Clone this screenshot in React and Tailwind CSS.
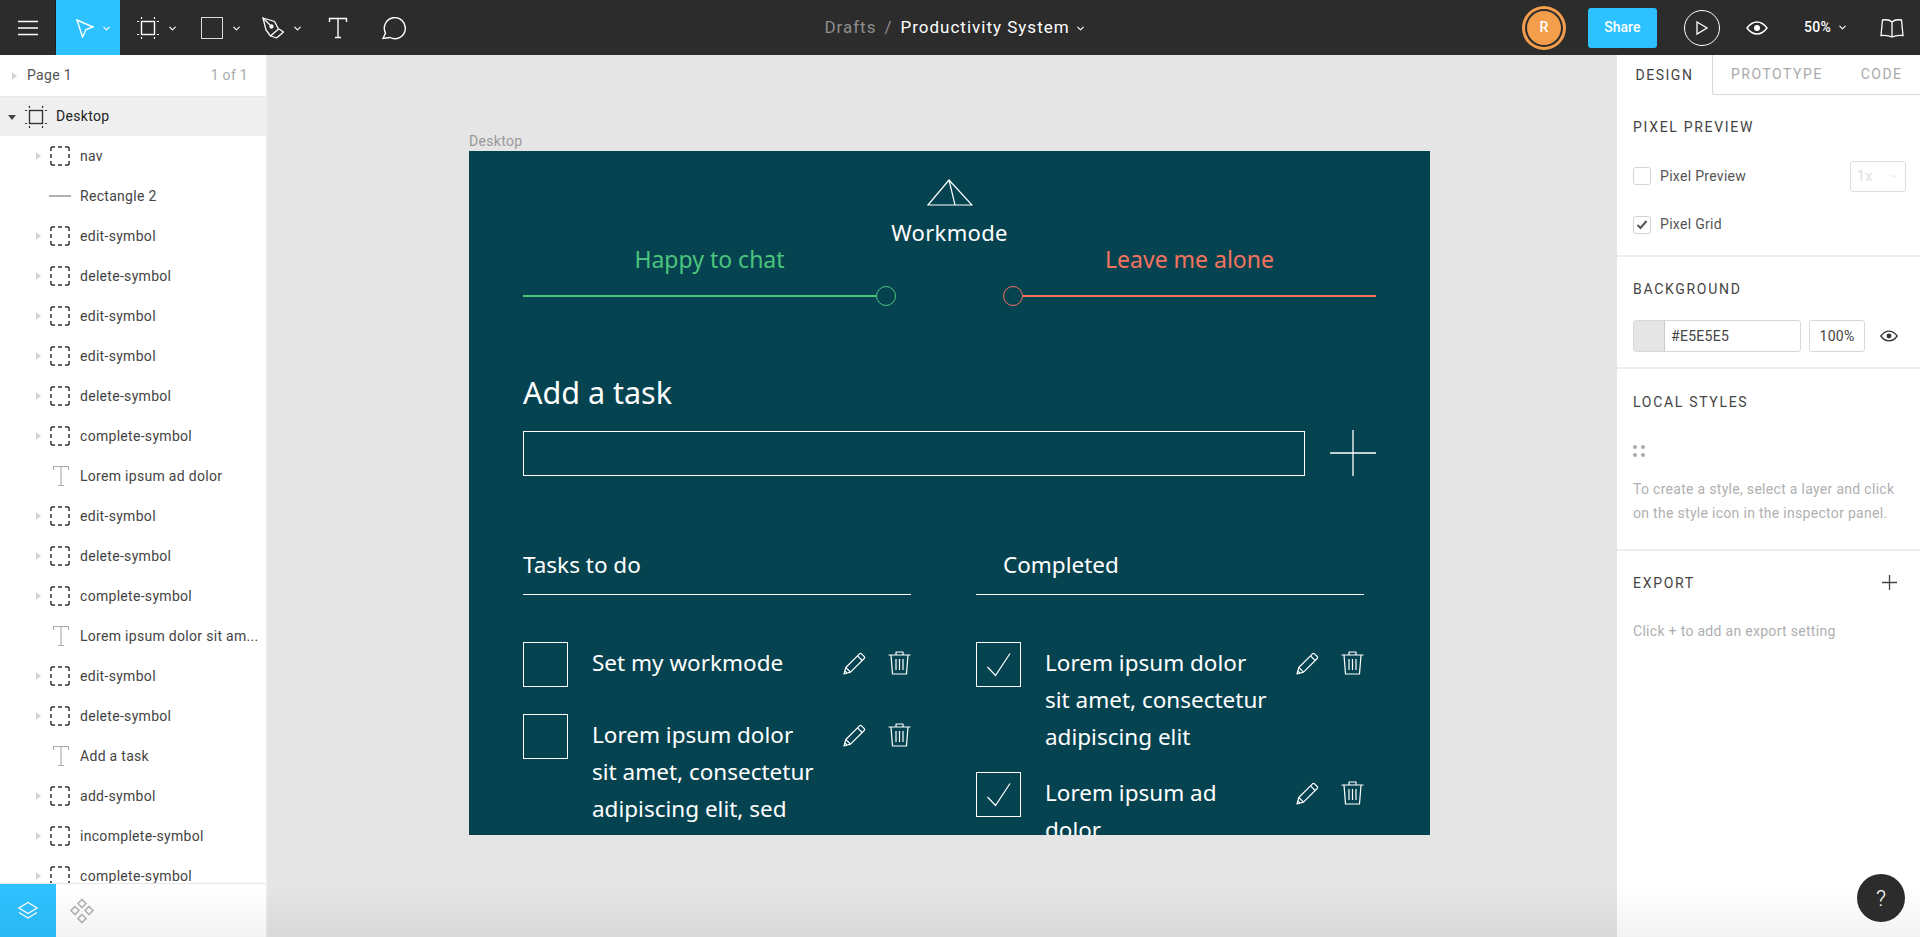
import { ChevronDown } from "lucide-react";

const layers = [
  { name: "nav", type: "group" },
  { name: "Rectangle 2", type: "line" },
  { name: "edit-symbol", type: "group" },
  { name: "delete-symbol", type: "group" },
  { name: "edit-symbol", type: "group" },
  { name: "edit-symbol", type: "group" },
  { name: "delete-symbol", type: "group" },
  { name: "complete-symbol", type: "group" },
  { name: "Lorem ipsum ad dolor", type: "text" },
  { name: "edit-symbol", type: "group" },
  { name: "delete-symbol", type: "group" },
  { name: "complete-symbol", type: "group" },
  { name: "Lorem ipsum dolor sit am...", type: "text" },
  { name: "edit-symbol", type: "group" },
  { name: "delete-symbol", type: "group" },
  { name: "Add a task", type: "text" },
  { name: "add-symbol", type: "group" },
  { name: "incomplete-symbol", type: "group" },
  { name: "complete-symbol", type: "group" },
];

function Caret({ down, className }) {
  return (
    <svg width="8" height="8" viewBox="0 0 8 8" className={className}>
      <path d={down ? "M0 2h8L4 7z" : "M2 0l5 4-5 4z"} fill="currentColor" />
    </svg>
  );
}

function FrameIcon({ className, size = 22 }) {
  return (
    <svg width={size} height={size} viewBox="0 0 22 22" fill="none" stroke="currentColor" className={className}>
      <rect x="4.500" y="4.500" width="13" height="13" strokeWidth="1.400" />
      <path d="M4.500 0v2M17.500 0v2M4.500 20v2M17.500 20v2M0 4.500h2M0 17.500h2M20 4.500h2M20 17.500h2" strokeWidth="1.200" />
    </svg>
  );
}

function GroupIcon() {
  return (
    <svg width="20" height="20" viewBox="0 0 20 20" fill="none" stroke="#333" strokeWidth="1.500">
      <path d="M1 5V2a1 1 0 0 1 1-1h3M15 1h3a1 1 0 0 1 1 1v3M19 15v3a1 1 0 0 1-1 1h-3M5 19H2a1 1 0 0 1-1-1v-3" />
      <path d="M8 1h4M8 19h4M1 8v4M19 8v4" />
    </svg>
  );
}

function LayerRow({ name, type }) {
  return (
    <div className="h-10 shrink-0 flex items-center text-[14px] tracking-[0.3px] text-[#444]">
      <div className="w-[50px] pl-[34px]">
        {type === "group" && <Caret className="text-[#d4d4d4]" />}
      </div>
      <div className="w-[30px] flex items-center">
        {type === "group" && <GroupIcon />}
        {type === "line" && <div className="w-[22px] h-[2px] -ml-[1px] bg-[#b0b0b0]" />}
        {type === "text" && (
          <svg width="22" height="24" viewBox="0 0 22 24" fill="none" stroke="#aaa" strokeWidth="1.100">
            <path d="M3.500 6V2.500h15V6M11 2.500v19M8 21.500h6" />
          </svg>
        )}
      </div>
      <span className="whitespace-nowrap">{name}</span>
    </div>
  );
}

function LeftPanel() {
  return (
    <aside className="w-[267px] shrink-0 h-full bg-white flex flex-col border-r border-[#f0f0f0]">
      <div className="h-[41px] shrink-0 flex items-center pl-[10px] pr-[18px] text-[14px] tracking-[0.3px]">
        <Caret className="text-[#d4d4d4]" />
        <span className="ml-[9px] text-[#555]">Page 1</span>
        <span className="ml-auto text-[#aaa]">1 of 1</span>
      </div>
      <div className="h-10 shrink-0 flex items-center pl-[8px] bg-[#efefef] border-t border-[#e8e8e8] text-[14px] tracking-[0.3px] text-[#222]">
        <Caret down className="text-[#444]" />
        <FrameIcon className="ml-[9px] text-[#333]" />
        <span className="ml-[9px]">Desktop</span>
      </div>
      <div className="flex-1 min-h-0 overflow-hidden flex flex-col">
        {layers.map((layer, i) => (
          <LayerRow key={i} {...layer} />
        ))}
      </div>
      <div className="h-[54px] shrink-0 flex bg-white border-t border-[#e6e6e6]">
        <div className="w-[56px] bg-[#2dc1ff] flex items-center justify-center">
          <svg width="22" height="22" viewBox="0 0 22 22" fill="none" stroke="white" strokeWidth="1.400">
            <path d="M11 2.500L20 8l-9 5.500L2 8z" />
            <path d="M2 12.500l9 5.500 9-5.500" />
          </svg>
        </div>
        <div className="w-[52px] flex items-center justify-center">
          <svg width="26" height="26" viewBox="0 0 26 26" fill="none" stroke="#b5b5b5" strokeWidth="1.600">
            <path d="M13 1.500l4 4-4 4-4-4zM6 8.500l4 4-4 4-4-4zM20 8.500l4 4-4 4-4-4zM13 16.500l4 4-4 4-4-4z" />
          </svg>
        </div>
      </div>
    </aside>
  );
}

function TopBar() {
  return (
    <header className="h-[55px] shrink-0 bg-[#2c2c2c] flex items-center text-white">
      <div className="flex-1 flex items-center h-full">
        <div className="w-[56px] h-full flex items-center justify-center border-r border-[#1f1f1f]">
          <svg width="20" height="16" viewBox="0 0 20 16" stroke="white" strokeWidth="1.300">
            <path d="M0 1.500h20M0 8h20M0 14.500h20" />
          </svg>
        </div>
        <div className="w-[64px] h-full bg-[#2dc1ff] flex items-center pl-[19px]">
          <svg width="20" height="20" viewBox="0 0 20 20" fill="none" stroke="white" strokeWidth="1.400">
            <path d="M2 2l16 7-7 2.500L7.500 19z" />
          </svg>
          <ChevronDown size={11} strokeWidth={2.500} className="ml-[6px] mt-[1px]" />
        </div>
        <div className="flex items-center ml-[17px]">
          <FrameIcon className="text-white" />
          <ChevronDown size={11} strokeWidth={2.500} className="ml-[8px] mt-[1px]" />
        </div>
        <div className="flex items-center ml-[23px]">
          <div className="w-[22px] h-[22px] border-[1.5px] border-[#ddd]" />
          <ChevronDown size={11} strokeWidth={2.500} className="ml-[8px] mt-[1px]" />
        </div>
        <div className="flex items-center ml-[20px]">
          <svg width="22" height="24" viewBox="0 0 22 24" fill="none" stroke="white" strokeWidth="1.300">
            <path d="M1 2l11.500 3.500 4 7.500-4 3.500-4 3.500L4 14z" />
            <path d="M1 2l7 7" />
            <circle cx="9.500" cy="10.500" r="1.500" fill="white" />
            <path d="M14.500 22l7-6-4.500-3M14.500 22L9 20" />
          </svg>
          <ChevronDown size={11} strokeWidth={2.500} className="ml-[8px] mt-[1px]" />
        </div>
        <svg width="20" height="22" viewBox="0 0 20 22" fill="none" stroke="white" strokeWidth="1.400" className="ml-[25px]">
          <path d="M1.500 5V1.500h17V5M10 1.500v19M7 20.500h6" />
        </svg>
        <svg width="24" height="24" viewBox="0 0 24 24" fill="none" stroke="white" strokeWidth="1.400" className="ml-[34px]">
          <path d="M1 22.500l2.500-5.500A10.500 10.500 0 1 1 8 21.500z" />
        </svg>
      </div>

      <div className="flex items-center ml-[6px] text-[17px] tracking-[1px]">
        <span className="text-[#8e8e8e]">Drafts</span>
        <span className="mx-[8px] text-[#8e8e8e]">/</span>
        <span className="text-white">Productivity System</span>
        <ChevronDown size={11} strokeWidth={2.500} className="ml-[5px] mt-[1px]" />
      </div>

      <div className="flex-1 flex items-center justify-end pr-[16px]">
        <div className="w-11 h-11 rounded-full bg-[#f49d4b] p-[3px]">
          <div className="w-full h-full rounded-full bg-[#2c2c2c] p-[2px]">
            <div className="w-full h-full rounded-full bg-[#f49d4b] flex items-center justify-center text-[14px] font-medium">
              R
            </div>
          </div>
        </div>
        <div className="ml-[22px] w-[69px] h-10 rounded-[3px] bg-[#2dc1ff] flex items-center justify-center text-[14px] font-medium">
          Share
        </div>
        <div className="ml-[27px] w-9 h-9 rounded-full border-[1.5px] border-white flex items-center justify-center">
          <svg width="14" height="16" viewBox="0 0 14 16" fill="none" stroke="white" strokeWidth="1.300" className="ml-[1px]">
            <path d="M2 2l10 6-10 6z" />
          </svg>
        </div>
        <svg width="22" height="14" viewBox="0 0 22 14" fill="none" stroke="white" strokeWidth="1.400" className="ml-[26px]">
          <path d="M1 7c3-4 6.500-6 10-6s7 2 10 6c-3 4-6.500 6-10 6S4 11 1 7z" />
          <circle cx="11" cy="7" r="3" fill="white" stroke="none" />
        </svg>
        <span className="ml-[36px] text-[14px] font-medium tracking-[0.3px]">50%</span>
        <ChevronDown size={11} strokeWidth={2.500} className="ml-[6px]" />
        <svg width="24" height="20" viewBox="0 0 24 20" fill="none" stroke="white" strokeWidth="1.300" className="ml-[32px]">
          <path d="M12 4C10 2 6 1.500 2.500 2L1 17.500c4-.5 8 0 11 1.500 3-1.500 7-2 11-1.500L21.500 2C18 1.500 14 2 12 4zM12 4v15" />
        </svg>
      </div>
    </header>
  );
}

function SectionTitle({ children }) {
  return <div className="text-[14px] leading-none tracking-[1.7px] text-[#444]">{children}</div>;
}

function RightPanel() {
  return (
    <aside className="w-[303px] shrink-0 h-full bg-white flex flex-col text-[14px] tracking-[0.3px]">
      <div className="h-[40px] shrink-0 flex tracking-[1.5px]">
        <div className="w-[95px] flex items-center justify-center text-[#444]">DESIGN</div>
        <div className="flex-1 flex items-center border-l border-b border-[#d8d8d8] rounded-bl-[3px] pl-[18px] text-[#aaa]">
          <span>PROTOTYPE</span>
          <span className="ml-[38px]">CODE</span>
        </div>
      </div>

      <section className="h-[162px] shrink-0 border-b-2 border-[#eee] pl-[16px] pr-[14px] pt-[25px]">
        <SectionTitle>PIXEL PREVIEW</SectionTitle>
        <div className="flex items-center mt-[26px] h-8">
          <div className="w-[18px] h-[18px] rounded-[3px] border border-[#d4d4d4]" />
          <span className="ml-[9px] text-[#555]">Pixel Preview</span>
          <div className="ml-auto w-[56px] h-[31px] rounded-[3px] border border-[#ddd] flex items-center justify-between px-[6px] text-[#ddd]">
            1x
            <ChevronDown size={10} strokeWidth={2} />
          </div>
        </div>
        <div className="flex items-center mt-[22px]">
          <div className="w-[18px] h-[18px] rounded-[3px] border border-[#d4d4d4] flex items-center justify-center">
            <svg width="12" height="10" viewBox="0 0 12 10" fill="none" stroke="#555" strokeWidth="2">
              <path d="M1.500 5l3 3 6-7" />
            </svg>
          </div>
          <span className="ml-[9px] text-[#555]">Pixel Grid</span>
        </div>
      </section>

      <section className="h-[112px] shrink-0 border-b-2 border-[#eee] pl-[16px] pt-[25px]">
        <SectionTitle>BACKGROUND</SectionTitle>
        <div className="flex items-center mt-[24px]">
          <div className="w-[168px] h-8 rounded-[3px] border border-[#d8d8d8] flex overflow-hidden">
            <div className="w-[31px] bg-[#e5e5e5] border-r border-[#ccc]" />
            <span className="ml-[6px] leading-[30px] text-[#444]">#E5E5E5</span>
          </div>
          <div className="ml-[8px] w-[56px] h-8 rounded-[3px] border border-[#d8d8d8] flex items-center justify-center text-[#444]">
            100%
          </div>
          <svg width="18" height="12" viewBox="0 0 22 14" fill="none" stroke="#333" strokeWidth="1.600" className="ml-[15px]">
            <path d="M1 7c3-4 6.500-6 10-6s7 2 10 6c-3 4-6.500 6-10 6S4 11 1 7z" />
            <circle cx="11" cy="7" r="3" fill="#333" stroke="none" />
          </svg>
        </div>
      </section>

      <section className="h-[182px] shrink-0 border-b-2 border-[#eee] pl-[16px] pt-[26px]">
        <SectionTitle>LOCAL STYLES</SectionTitle>
        <div className="grid grid-cols-2 w-[12px] gap-[4px] mt-[36px]">
          <span className="w-1 h-1 rounded-full bg-[#aaa]" />
          <span className="w-1 h-1 rounded-full bg-[#aaa]" />
          <span className="w-1 h-1 rounded-full bg-[#aaa]" />
          <span className="w-1 h-1 rounded-full bg-[#aaa]" />
        </div>
        <p className="mt-[20px] leading-[24px] text-[#b0b0b0]">
          To create a style, select a layer and click
          <br />
          on the style icon in the inspector panel.
        </p>
      </section>

      <section className="pl-[16px] pr-[20px] pt-[24px]">
        <div className="flex items-center justify-between">
          <SectionTitle>EXPORT</SectionTitle>
          <svg width="15" height="15" viewBox="0 0 15 15" stroke="#444" strokeWidth="1.300" className="mr-[3px]">
            <path d="M7.500 0v15M0 7.500h15" />
          </svg>
        </div>
        <p className="mt-[34px] leading-none text-[#b0b0b0]">Click + to add an export setting</p>
      </section>
    </aside>
  );
}

function Pencil() {
  return (
    <svg width="23" height="23" viewBox="0 0 23 23" fill="none" stroke="white" strokeWidth="1.200" strokeLinejoin="round">
      <path d="M1 22l1.800-6.500L16.500 1.800a1.500 1.500 0 0 1 2 0l2.700 2.700a1.500 1.500 0 0 1 0 2L7.500 20.200z" />
      <path d="M2.800 15.500l4.700 4.700M14.500 3.800l4.700 4.700M2 19l2 2" />
    </svg>
  );
}

function Trash() {
  return (
    <svg width="23" height="24" viewBox="0 0 23 24" fill="none" stroke="white" strokeWidth="1.200" strokeLinejoin="round">
      <path d="M0.500 4h22M8 4V1h7v3M3 4l1.500 19h14L20 4" />
      <path d="M8 8v11M11.500 8v11M15 8v11" />
    </svg>
  );
}

function Task({ checked, lines, className }) {
  return (
    <div className={`flex items-start ${className}`}>
      <div className="w-[45px] h-[45px] shrink-0 border-[1.5px] border-white flex items-center justify-center">
        {checked && (
          <svg width="26" height="26" viewBox="0 0 26 26" fill="none" stroke="white" strokeWidth="1.200">
            <path d="M1.500 15l8 8.500L24 1.500" />
          </svg>
        )}
      </div>
      <div className="ml-[24px] flex-1 mt-[2px] text-[22.5px] leading-[37px] text-white whitespace-nowrap">
        {lines.map((line) => (
          <div key={line}>{line}</div>
        ))}
      </div>
      <div className="flex items-center gap-[22px] mt-[9px]">
        <Pencil />
        <Trash />
      </div>
    </div>
  );
}

function Frame() {
  return (
    <div className="w-[961px] h-[684px] overflow-hidden bg-[#064350] px-[54px] font-['Noto_Sans',sans-serif] text-white">
      <div className="flex justify-center pt-[28px]">
        <svg width="46" height="27" viewBox="0 0 46 27" fill="none" stroke="white" strokeWidth="1.200">
          <path d="M1 26L22 1l23 25zM22 1l6 25" />
        </svg>
      </div>
      <div className="text-center text-[22px] leading-[30px] mt-[11px] tracking-[0.3px]">Workmode</div>

      <div className="flex justify-between text-[23px] leading-[30px]">
        <div className="w-[373px] -mt-[3px]">
          <div className="text-center text-[#4cc47d]">Happy to chat</div>
          <div className="flex items-center mt-[12px]">
            <div className="flex-1 h-[1.5px] bg-[#4cc47d]" />
            <div className="w-[20px] h-[20px] rounded-full border-[1.5px] border-[#4cc47d]" />
          </div>
        </div>
        <div className="w-[373px] -mt-[3px]">
          <div className="text-center text-[#f4735e]">Leave me alone</div>
          <div className="flex items-center mt-[12px]">
            <div className="w-[20px] h-[20px] rounded-full border-[1.5px] border-[#f4735e]" />
            <div className="flex-1 h-[1.5px] bg-[#f4735e]" />
          </div>
        </div>
      </div>

      <div className="text-[30.5px] leading-[40px] mt-[66px]">Add a task</div>
      <div className="flex items-center mt-[18px]">
        <div className="w-[782px] h-[45px] border-[1.5px] border-white" />
        <svg width="46" height="46" viewBox="0 0 46 46" stroke="white" strokeWidth="1.300" className="ml-auto">
          <path d="M23 0v46M0 23h46" />
        </svg>
      </div>

      <div className="grid grid-cols-[388px_388px] gap-x-[65px] mt-[69px]">
        <div>
          <div className="h-[50px] border-b-[1.5px] border-white text-[22.5px] leading-[40px]">Tasks to do</div>
          <Task className="mt-[47px]" lines={["Set my workmode"]} />
          <Task className="mt-[27px]" lines={["Lorem ipsum dolor", "sit amet, consectetur", "adipiscing elit, sed"]} />
        </div>
        <div>
          <div className="h-[50px] border-b-[1.5px] border-white pl-[27px] text-[22.5px] leading-[40px]">Completed</div>
          <Task className="mt-[47px]" checked lines={["Lorem ipsum dolor", "sit amet, consectetur", "adipiscing elit"]} />
          <Task className="mt-[17px]" checked lines={["Lorem ipsum ad", "dolor"]} />
        </div>
      </div>
    </div>
  );
}

export default function App() {
  return (
    <div className="relative w-full h-[937px] overflow-hidden flex flex-col font-['Roboto',sans-serif] bg-[#e5e5e5]">
      <TopBar />
      <div className="flex-1 min-h-0 flex">
        <LeftPanel />
        <main className="flex-1 min-w-0 overflow-hidden pl-[202px] pt-[79px]">
          <div className="text-[14px] leading-[14px] tracking-[0.3px] mb-[3px] text-[#999]">Desktop</div>
          <Frame />
        </main>
        <RightPanel />
      </div>
      <div className="absolute left-0 right-0 bottom-0 h-[50px] pointer-events-none bg-gradient-to-b from-transparent to-black/5" />
      <div className="absolute right-[15px] bottom-[15px] w-12 h-12 rounded-full bg-[#2c2c2c] flex items-center justify-center text-[22px] font-light text-white">
        ?
      </div>
    </div>
  );
}
